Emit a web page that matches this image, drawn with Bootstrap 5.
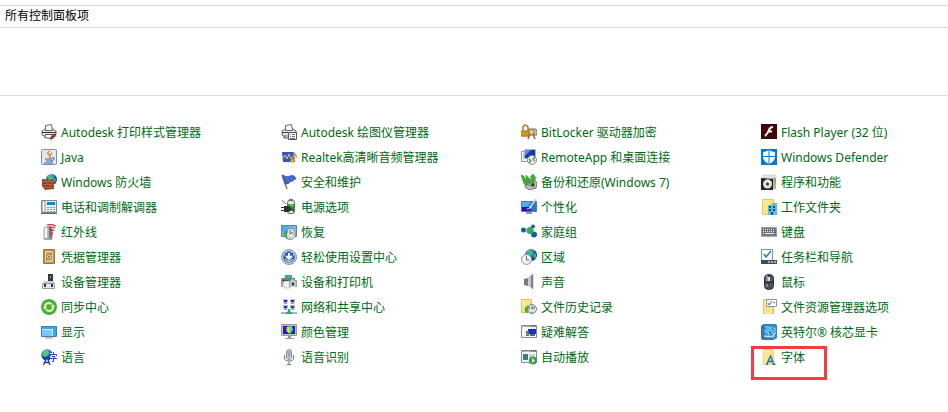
<!DOCTYPE html>
<html lang="zh-CN">
<head>
<meta charset="utf-8">
<meta name="viewport" content="width=device-width, initial-scale=1">
<title>所有控制面板项</title>
<link href="https://cdn.jsdelivr.net/npm/bootstrap@5.3.0/dist/css/bootstrap.min.css" rel="stylesheet">
<style>
body{font-family:"Noto Sans","Noto Sans CJK SC",sans-serif;font-size:12px;line-height:18px;background:#fff;color:#000}
.address{margin-top:5px;height:23px;padding:0 5px 2px;border-top:1px solid #d9d9d9;border-bottom:1px solid #d9d9d9}
.heading-space{height:68px;border-bottom:1px solid #d6dff0}
.panel-items{padding:28px 0 16px 41px;display:grid;grid-template-columns:repeat(3,240fr) 187fr;grid-auto-rows:25px}
.panel-items a{color:#006a12;gap:4px;height:25px;white-space:nowrap}
.panel-items a:hover span{text-decoration:underline}
.panel-items svg{width:16px;height:16px;flex:none}
.marked{position:relative}
.marked::after{content:"";position:absolute;left:-10px;top:-3px;width:76px;height:34px;border:3px solid #fa3a3e;pointer-events:none}
</style>
</head>
<body>
<svg width="0" height="0" class="position-absolute" aria-hidden="true"><defs>
<linearGradient id="sky" x1="0" y1="0" x2="1" y2="1"><stop stop-color="#39a5f5"/><stop offset="1" stop-color="#8ed0ff"/></linearGradient>
<linearGradient id="metal"><stop stop-color="#eee"/><stop offset=".5" stop-color="#bbb"/><stop offset="1" stop-color="#666"/></linearGradient>
<radialGradient id="sea" cx=".4" cy=".3"><stop stop-color="#bdf0ff"/><stop offset=".5" stop-color="#2c8ee6"/><stop offset="1" stop-color="#0a3fb0"/></radialGradient>
<linearGradient id="hue"><stop stop-color="#f33"/><stop offset=".3" stop-color="#fe3"/><stop offset=".6" stop-color="#4e5"/><stop offset="1" stop-color="#3cf"/></linearGradient>
<linearGradient id="folder" x1="0" y1="0" x2="1" y2="1"><stop stop-color="#fff0a8"/><stop offset="1" stop-color="#f5d56c"/></linearGradient>
</defs></svg>
<header class="address d-flex align-items-center">所有控制面板项</header>
<div class="heading-space"></div>
<main class="panel-items">
<a href="#" class="d-flex align-items-start text-decoration-none"><svg viewBox="0 0 16 16"><path d="M1 7l3-2h8l3 2v4l-2 1H3l-2-1z" fill="#e4e4e4" stroke="#444" stroke-width=".8"/><path d="M4.500 6.500v-5l6-1 1 6z" fill="#fff" stroke="#666"/><path d="M1 8.500h14" stroke="#333"/><path d="M4.500 10.500h7l-2 4-6-1z" fill="#fff" stroke="#555"/><path d="M9 14l4-3 2 1-5 4z" fill="#a51c24"/><path d="M12 10h3v1h-3z" fill="#333"/></svg><span>Autodesk 打印样式管理器</span></a>
<a href="#" class="d-flex align-items-start text-decoration-none"><svg viewBox="0 0 16 16"><path d="M1 7l3-2h8l3 2v4l-2 1H3l-2-1z" fill="#e4e4e4" stroke="#444" stroke-width=".8"/><path d="M4.500 6.500v-5l6-1 1 6z" fill="#fff" stroke="#666"/><path d="M1 8.500h6M3 12v2h4" fill="none" stroke="#444"/><path d="M7.500 8.500h8v7h-8z" fill="#fff" stroke="#555"/><path d="M9 10.500h1m1 0h3M9 12.500h1m1 0h3M9 14.500h5" stroke="#777"/></svg><span>Autodesk 绘图仪管理器</span></a>
<a href="#" class="d-flex align-items-start text-decoration-none"><svg viewBox="0 0 16 16"><path d="M7 5h8l1 2v4H8z" fill="#b9bcc0" stroke="#777"/><path d="M9 7h5" stroke="#fff"/><path d="M2 7V3q2-4 5 0v4" fill="none" stroke="#ad7c24" stroke-width="1.500"/><path d="M0 6h8v7H0z" fill="#d4a13c"/><path d="M0 8h8M0 11h8" stroke="#966313" stroke-width=".7"/><circle cx="10.500" cy="8" r="2.700" fill="#ebcf83" stroke="#8e6d28"/><path d="M9 10l-2 5M12 10l2 5" stroke="#8b713b" stroke-width="1.600"/></svg><span>BitLocker 驱动器加密</span></a>
<a href="#" class="d-flex align-items-start text-decoration-none"><svg viewBox="0 0 16 16"><path d="M0 0h16v15H0z" fill="#410608"/><path d="M12 3Q9 3 8 6T4 12M7 7.500h4" fill="none" stroke="#fff" stroke-width="2"/></svg><span>Flash Player (32 位)</span></a>

<a href="#" class="d-flex align-items-start text-decoration-none"><svg viewBox="0 0 16 16"><rect x=".5" y=".5" width="15" height="15" rx="1" fill="#e2e8ee" stroke="#7b8da1"/><path d="M9 2Q5 4 8 6t0 3M11 4Q8 6 9 8" fill="none" stroke="#e87923" stroke-width="1.300"/><path d="M4 10h7M5 12h6M3 14h9M11 9q3-1 2 1t-3 2" fill="none" stroke="#36699c"/></svg><span>Java</span></a>
<a href="#" class="d-flex align-items-start text-decoration-none"><svg viewBox="0 0 16 16"><path d="M1 3h12l1 10H2z" fill="#3154c5"/><path d="M2 9l2-3 2 4 2-5 2 5 2-3" fill="none" stroke="#e4cd54"/><path d="M13 11V4q3 2 2 5" fill="none" stroke="#d39c29" stroke-width="1.300"/><circle cx="11.500" cy="12" r="2" fill="#e3ae32"/></svg><span>Realtek高清晰音频管理器</span></a>
<a href="#" class="d-flex align-items-start text-decoration-none"><svg viewBox="0 0 16 16"><path d="M.5 2.500h8v10h-8z" fill="#f4f4f4" stroke="#999"/><path d="M2 5h3M2 7h3M2 9h3" stroke="#999"/><path d="M3.500.500h11v9h-11z" fill="#123bb0" stroke="#aeb8c5"/><path d="M4 1h6L5 6H4z" fill="#5e8ee8"/><circle cx="11" cy="11" r="4.500" fill="#eef0ef" stroke="#858b90"/><path d="M8 10l2 2-2 2M14 8l-2 2 2 2" fill="none" stroke="#3b973f" stroke-width="1.200"/></svg><span>RemoteApp 和桌面连接</span></a>
<a href="#" class="d-flex align-items-start text-decoration-none"><svg viewBox="0 0 16 16"><path d="M0 0h16v16H0z" fill="#0878d8"/><path d="M8 1q3 2 6 2v5q0 4-6 7-6-3-6-7V3q3 0 6-2z" fill="#fff"/><path d="M8 0v16M1 7.500h14" stroke="#0878d8"/></svg><span>Windows Defender</span></a>

<a href="#" class="d-flex align-items-start text-decoration-none"><svg viewBox="0 0 16 16"><circle cx="10.500" cy="5.500" r="5.500" fill="url(#sea)"/><path d="M8 1l4 1-2 4-3-1zM13 3l2 3-2 3z" fill="#54bb4a"/><path d="M1 5l12 1v9l-9 1-3-4z" fill="#8f422c"/><path d="M1 7.500h12M2 10.500h11M3 13.500h10M4 5v2M8 5v2M6 8v2M11 8v2M4 11v2M9 11v2M7 14v2" stroke="#c27a62" stroke-width=".6"/></svg><span>Windows 防火墙</span></a>
<a href="#" class="d-flex align-items-start text-decoration-none"><svg viewBox="0 0 16 16"><path d="M1 1l5 14" stroke="#777" stroke-width="1.500"/><path d="M2 1q3 3 7 1t6 3q-3 0-3 2-3 0-4 2-2 2-4 0z" fill="#3e64cb" stroke="#2441a0" stroke-width=".7"/><path d="M6 3l2 5M10 3l1 4" stroke="#5b7bd8"/></svg><span>安全和维护</span></a>
<a href="#" class="d-flex align-items-start text-decoration-none"><svg viewBox="0 0 16 16"><path d="M5 7l8-3 3 5-1 5-7 2-4-3z" fill="#bbb" stroke="#777"/><circle cx="10" cy="9" r="3" fill="#eee" stroke="#777"/><path d="M0 1l3 1 2 5V1l3 3 3 5V4l-2-1 3-3 3 4-2 1v6q-3 2-5-2l-1-2v4q-4 1-5-4z" fill="#3cae38" stroke="#187b1d" stroke-width=".4"/><circle cx="12" cy="11" r="1.500" fill="#333"/></svg><span>备份和还原(Windows 7)</span></a>
<a href="#" class="d-flex align-items-start text-decoration-none"><svg viewBox="0 0 16 16"><path d="M2 1h13v3H2z" fill="#e5e8e7" stroke="#bbb" stroke-width=".5"/><path d="M10 4h5v11h-5z" fill="#b4b89c"/><path d="M12 3l3 3v5z" fill="#cf7956"/><path d="M0 4l12 1v11H0z" fill="#20262b"/><circle cx="6.500" cy="10" r="4.500" fill="#d9dfe4"/><path d="M6 5l2 4 3-1" fill="#fff"/><circle cx="6.500" cy="10" r="1.500" fill="#333"/></svg><span>程序和功能</span></a>

<a href="#" class="d-flex align-items-start text-decoration-none"><svg viewBox="0 0 16 16"><path d="M.5 1.500h15v12H.5z" fill="#eef1f2" stroke="#7c868e"/><path d="M1 2h4v11H1z" fill="#bfc5c8"/><path d="M2.500 3v9" stroke="#fff"/><path d="M6 3h8v3H6z" fill="#1682c8"/><path d="M6 8.500h2m1 0h2m1 0h2M6 10.500h2m1 0h2m1 0h2M6 12.500h2m1 0h2m1 0h2" stroke="#8c989f"/><path d="M0 14.500h16" stroke="#666"/></svg><span>电话和调制解调器</span></a>
<a href="#" class="d-flex align-items-start text-decoration-none"><svg viewBox="0 0 16 16"><path d="M1 1l4 4" stroke="#777"/><path d="M8 0h4v2H8z" fill="#777"/><rect x="6.500" y="1.500" width="7" height="13" rx="2" fill="#e7e7e7" stroke="#666"/><path d="M7 5h6v7H7z" fill="#2fa33a"/><path d="M9 6h3" stroke="#a8ef88"/><path d="M3 7h3q4 0 4 3t-4 3H3z" fill="#2e3433"/><path d="M0 8.500h3M0 11.500h3M10 10q4 0 2 3" fill="none" stroke="#333"/></svg><span>电源选项</span></a>
<a href="#" class="d-flex align-items-start text-decoration-none"><svg viewBox="0 0 16 16"><path d="M.5 2.500h15v10H.5z" fill="#1680d8" stroke="#5b798b"/><path d="M1 3h9L6 8H1z" fill="#48b3f1"/><path d="M1 8h9v4H1z" fill="#3006cf"/><path d="M15 0l-5 7" stroke="#c3c7c9" stroke-width="2"/><path d="M10 6q-2 0-2 3l-3 1q5 1 6-3z" fill="#eee" stroke="#777" stroke-width=".5"/><path d="M5 14h6" stroke="#999" stroke-width="2"/></svg><span>个性化</span></a>
<a href="#" class="d-flex align-items-start text-decoration-none"><svg viewBox="0 0 16 16"><path d="M1.500.500h11v15h-11z" fill="url(#folder)" stroke="#e7c75f"/><path d="M7 6h4V4h5v12H7z" fill="#5cbce8"/><path d="M8 7h2v2H8zm4 0h2v2h-2zm-4 3h2v2H8zm4 0h2v2h-2zM10 13h2v3h-2z" fill="#125782"/></svg><span>工作文件夹</span></a>

<a href="#" class="d-flex align-items-start text-decoration-none"><svg viewBox="0 0 16 16"><path d="M3 4l5-2 3 2v11H3z" fill="url(#metal)" stroke="#777" stroke-width=".6"/><path d="M5 4v10" stroke="#fff" stroke-width="1.500"/><path d="M8 5h2v8H8z" fill="#777"/><path d="M3 15h8" stroke="#888"/><path d="M6 1q4-1 9 1M8 4q3-2 6 0M9 6q2-1 4 1M11 8v3" fill="none" stroke="#cb232d" stroke-width="1.200"/></svg><span>红外线</span></a>
<a href="#" class="d-flex align-items-start text-decoration-none"><svg viewBox="0 0 16 16"><path d="M.5 1.500h15v11H.5z" fill="url(#sky)" stroke="#668696"/><circle cx="9" cy="10" r="5.500" fill="#e1e5e5" stroke="#7f8c8d"/><path d="M9 6v4l3-2M5 10h1m6 0h1m-4 3v1" fill="none" stroke="#666"/><path d="M2 10l4-5 1 3q-2 2 0 7-4-1-3-5z" fill="#3aac4a"/></svg><span>恢复</span></a>
<a href="#" class="d-flex align-items-start text-decoration-none"><svg viewBox="0 0 16 16"><path d="M9 7l4-4M9 8l4 3" stroke="#9cb4bf"/><circle cx="2.500" cy="6" r="2.500" fill="#155eaa"/><circle cx="12" cy="2.500" r="2" fill="#155eaa"/><circle cx="13" cy="10.500" r="3" fill="#155eaa"/><circle cx="9" cy="6.500" r="3.500" fill="#31a957"/></svg><span>家庭组</span></a>
<a href="#" class="d-flex align-items-start text-decoration-none"><svg viewBox="0 0 16 16"><path d="M.5 3.500h15v8H.5z" fill="#6c747e" stroke="#9ca2a8"/><path d="M2 5.500h12M2 7.500h12M2 9.500h2m8 0h2" stroke="#e8ebed" stroke-dasharray="1 1"/><path d="M4 9.500h8" stroke="#e8ebed"/><path d="M0 12h16" stroke="#555d65"/></svg><span>键盘</span></a>

<a href="#" class="d-flex align-items-start text-decoration-none"><svg viewBox="0 0 16 16"><path d="M2.500.500h11v14h-11z" fill="#b89146" stroke="#9d7b38"/><path d="M4.500 2.500h7v10h-7z" fill="#d3b372" stroke="#e8d29a"/><circle cx="8" cy="7.500" r="2.500" fill="#eee0b9" stroke="#8b764c"/><circle cx="8" cy="7.500" r="1" fill="#725d35"/><path d="M10 5l1-1M5 11l1-1" stroke="#725d35"/></svg><span>凭据管理器</span></a>
<a href="#" class="d-flex align-items-start text-decoration-none"><svg viewBox="0 0 16 16"><circle cx="8" cy="8" r="7.500" fill="#c6ccd3" stroke="#8a97a5"/><circle cx="8" cy="8" r="5.800" fill="#245fc7"/><path d="M8 4v6M5 7l3 3 3-3" fill="none" stroke="#fff" stroke-width="2"/><path d="M4 10q4 5 8 0" fill="none" stroke="#fff"/><path d="M3 6h1m1-3h1m4 0h1m1 3h1" stroke="#fff"/></svg><span>轻松使用设置中心</span></a>
<a href="#" class="d-flex align-items-start text-decoration-none"><svg viewBox="0 0 16 16"><circle cx="10" cy="6" r="6" fill="url(#sea)"/><path d="M8 1l4 1-3 4-3-1zM12 6l3-2v4l-2 2z" fill="#4bb847"/><circle cx="5.500" cy="10.500" r="5" fill="#eef1f3" stroke="#8b9aa8"/><path d="M5.500 7v4H8" fill="none" stroke="#5f7386"/></svg><span>区域</span></a>
<a href="#" class="d-flex align-items-start text-decoration-none"><svg viewBox="0 0 16 16"><path d="M.5.500h11v11H.5z" fill="#fff" stroke="#8290a2"/><path d="M3 5l2 3 5-6" fill="none" stroke="#1883d7" stroke-width="1.600"/><path d="M0 11h16v4H0z" fill="#414c59"/><path d="M7 13h2m1 0h2m1 0h2" stroke="#a7b4bf" stroke-width="2"/></svg><span>任务栏和导航</span></a>

<a href="#" class="d-flex align-items-start text-decoration-none"><svg viewBox="0 0 16 16"><path d="M7 0h5v8H7z" fill="#333b3d"/><path d="M9 2h1v2H9z" fill="#4cf24a"/><path d="M3 7h10l1 3H2z" fill="#c8ccd0"/><path d="M1.500 9.500h12v5h-12z" fill="#e5e7e9" stroke="#979ba0"/><path d="M3 10h2v3H3zM10 10h2v3h-2z" fill="#333"/></svg><span>设备管理器</span></a>
<a href="#" class="d-flex align-items-start text-decoration-none"><svg viewBox="0 0 16 16"><path d="M4 1h7v3H4z" fill="#21a6e5"/><path d="M7 1h3v3H7z" fill="#2ebd75"/><path d="M1 4h13v4H0V6z" fill="#777d83"/><path d="M2 6h10v2H2z" fill="#353b3e"/><path d="M3 7h6v7H3z" fill="#f4f4f4" stroke="#999" stroke-width=".5"/><path d="M0 7h2v6H0zM8 6h8v7H8z" fill="#9ba2a7"/><path d="M10 6h3" stroke="#ddd"/><circle cx="12" cy="10" r="3" fill="#dce2e2"/><circle cx="12" cy="10" r="1.700" fill="#34444d"/></svg><span>设备和打印机</span></a>
<a href="#" class="d-flex align-items-start text-decoration-none"><svg viewBox="0 0 16 16"><path d="M3 5l4-1v8l-4-1z" fill="#74797f"/><path d="M7 4l5-4v15l-5-4z" fill="url(#metal)" stroke="#8c8f94" stroke-width=".5"/><path d="M11 2v11" stroke="#777"/></svg><span>声音</span></a>
<a href="#" class="d-flex align-items-start text-decoration-none"><svg viewBox="0 0 16 16"><rect x="3.500" y=".5" width="9" height="15" rx="4" fill="#4b535c" stroke="#252a31"/><path d="M5 3q0-2 2-2v6H5z" fill="#8b98a3"/><path d="M8 1v8M4 8q4 2 8 0" fill="none" stroke="#242b32"/><path d="M8 3v4" stroke="#d8e2e7" stroke-width="2"/><path d="M6 10v3" stroke="#7c8994" stroke-width="2"/></svg><span>鼠标</span></a>

<a href="#" class="d-flex align-items-start text-decoration-none"><svg viewBox="0 0 16 16"><circle cx="8" cy="8" r="8" fill="#46ad43"/><path d="M2 8h4L4 11zM14 8h-4l2-3z" fill="#f0efa5"/><path d="M4 8q0-4 4-4l3 1M12 8q0 4-4 4l-3-1" fill="none" stroke="#f0efa5" stroke-width="2"/></svg><span>同步中心</span></a>
<a href="#" class="d-flex align-items-start text-decoration-none"><svg viewBox="0 0 16 16"><path d="M2 0h5v4H2zM9 0h5v4H9zM2 6h5v4H2zM9 6h5v4H9z" fill="#bac2d0"/><path d="M3 1h3v2H3zM10 1h3v2h-3zM3 7h3v2H3zM10 7h3v2h-3z" fill="#1531c6"/><path d="M3 4.500h3M10 4.500h3M3 10.500h3M10 10.500h3" stroke="#8a94a4"/><path d="M0 14h16" stroke="#aab4b6" stroke-width="2"/><path d="M7 10h2v2l3 3H4l3-3z" fill="#24ad62"/></svg><span>网络和共享中心</span></a>
<a href="#" class="d-flex align-items-start text-decoration-none"><svg viewBox="0 0 16 16"><path d="M.5.500h10v13H.5z" fill="url(#folder)" stroke="#e2c15b"/><circle cx="11" cy="10" r="4.500" fill="#dfe2e4" stroke="#7e8689"/><path d="M11 7v3l3-2M8 10h1m2 3v1" fill="none" stroke="#555"/><path d="M3 10l4-4 2 3q-3 0-2 5-4 0-3-4z" fill="#42ad40"/></svg><span>文件历史记录</span></a>
<a href="#" class="d-flex align-items-start text-decoration-none"><svg viewBox="0 0 16 16"><path d="M2.500.500h9l1 2v12h-10z" fill="url(#folder)" stroke="#e2c15b"/><path d="M5.500.500h10v7h-10z" fill="#fff" stroke="#8f9598"/><path d="M7 4l1 2 3-4" fill="none" stroke="#1684d1"/><path d="M12 3.500h2" stroke="#687"/><path d="M10 9v5H4" fill="none" stroke="#fffbd5"/></svg><span>文件资源管理器选项</span></a>

<a href="#" class="d-flex align-items-start text-decoration-none"><svg viewBox="0 0 16 16"><path d="M.5 2.500h15v10H.5z" fill="#35a6f5" stroke="#4b7c9f"/><path d="M1 5h11v7H1z" fill="#d8f0ff"/><path d="M1 6h10v6H1z" fill="#7cc6ff"/><path d="M4 14h8" stroke="#8a989e"/></svg><span>显示</span></a>
<a href="#" class="d-flex align-items-start text-decoration-none"><svg viewBox="0 0 16 16"><path d="M.5.500h15v11H.5z" fill="#bfc1c4" stroke="#9a9da0"/><path d="M2 2h12v8H2z" fill="#1222c4"/><path d="M5 3l6-1 1 4-3 4-4-3z" fill="url(#hue)"/><path d="M7 12h3v2H7zM4 14h9v1H4z" fill="#999"/></svg><span>颜色管理</span></a>
<a href="#" class="d-flex align-items-start text-decoration-none"><svg viewBox="0 0 16 16"><path d="M.5 1.500h15v12H.5z" fill="#f7f8fa" stroke="#858c96"/><path d="M1 2h14v1H1z" fill="#aeb4bd"/><path d="M10 2h1m1 0h1m1 0h1" stroke="#333"/><path d="M7 5h8v5H7z" fill="#1732b6"/><path d="M5 7h3v5H5z" fill="#62717c"/><path d="M6 9h1v1H6z" fill="#4bf33f"/><path d="M9 11h5" stroke="#516579" stroke-width="2"/></svg><span>疑难解答</span></a>
<a href="#" class="d-flex align-items-start text-decoration-none"><svg viewBox="0 0 16 16"><rect x="1" width="15" height="15" rx="2" fill="#2488c9"/><path d="M0 2l3-2v14l11 1-2 1H2q-2 0-2-3z" fill="#3876a5"/><path d="M4 3h4v4H3m2-2h2m3-3v5h4V4h-2M4 9h4v3H4m6-3h3v4h-3" fill="none" stroke="#9ee4fc"/><path d="M3 12q8 3 12-4" fill="none" stroke="#eee"/></svg><span>英特尔® 核芯显卡</span></a>

<a href="#" class="d-flex align-items-start text-decoration-none"><svg viewBox="0 0 16 16"><circle cx="6" cy="6" r="5.700" fill="url(#sea)"/><path d="M3 2l4-1 1 3-3 4-4-2z" fill="#5bc963"/><path d="M3 15l3-8 3 8M9 4h7v8H9z" fill="#fff" fill-opacity=".8"/><path d="M2.500 16l3.500-8 3 8M4 13.500h4" fill="none" stroke="#173b9d" stroke-width="1.300"/><path d="M12.500 3v2M9.500 7V5.500h6V7M11 7.500h3l-1.500 2v3H11M9 9.500h7" fill="none" stroke="#173b9d" stroke-width=".9"/></svg><span>语言</span></a>
<a href="#" class="d-flex align-items-start text-decoration-none"><svg viewBox="0 0 16 16"><rect x="5.500" y=".5" width="5" height="10" rx="2.500" fill="#e2e6eb" stroke="#8790a1"/><path d="M6 3h4M6 5h4M6 7h4M8 1v9" stroke="#8d96aa"/><path d="M3.500 6v3q0 3 4.500 3t4.500-3V6M8 12v3M6 15.500h4" fill="none" stroke="#6b7890"/></svg><span>语音识别</span></a>
<a href="#" class="d-flex align-items-start text-decoration-none"><svg viewBox="0 0 16 16"><path d="M.5 1.500h15v12H.5z" fill="#f4f6f8" stroke="#858c96"/><path d="M1 2h14v1H1z" fill="#aeb4bd"/><path d="M10 2h1m1 0h1m1 0h1" stroke="#333"/><path d="M2 5h5v6H2z" fill="#397c86"/><path d="M8 6h6M8 8h6" stroke="#a6b1bb"/><circle cx="12" cy="11.500" r="4" fill="#32a43d"/><path d="M11 9l3 2.500-3 2.500z" fill="#fff"/></svg><span>自动播放</span></a>
<a href="#" class="d-flex align-items-start text-decoration-none marked"><svg viewBox="0 0 16 16"><path d="M2.500.500h9l1 2v13h-10z" fill="url(#folder)" stroke="#efd57c"/><path d="M6 15l3.500-8L13 15M7 12.500h5M5 15.500h2m4.500 0h3" fill="none" stroke="#1475c4" stroke-width="1.400"/></svg><span>字体</span></a>
</main>
<script src="https://cdn.jsdelivr.net/npm/bootstrap@5.3.0/dist/js/bootstrap.bundle.min.js"></script>
</body>
</html>
